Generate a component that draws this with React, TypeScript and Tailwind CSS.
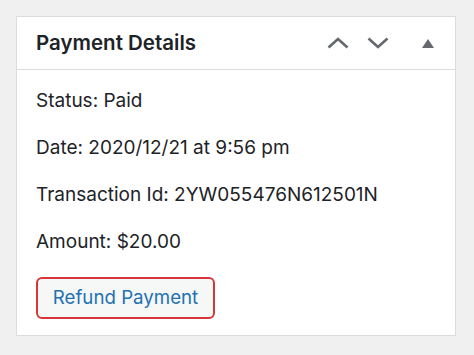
export default function App() {
  const rows = [
    "Status: Paid",
    "Date: 2020/12/21 at 9:56 pm",
    "Transaction Id: 2YW055476N612501N",
    "Amount: $20.00",
  ];

  return (
    <div
      className="w-[474px] h-[355px] bg-[#f0f0f1] pt-4 pl-4 pr-[18px]"
      style={{ fontFamily: "Inter, 'Liberation Sans', sans-serif" }}
    >
      <div className="bg-white border border-[#dcdcde] h-[320px]">
        <div className="flex items-center h-[53px] pl-[19px] pr-[21px] border-b border-[#dcdcde]">
          <h2 className="text-[20.5px] font-semibold text-[#1d2327] flex-1">Payment Details</h2>
          <div className="flex items-center text-[#646970]">
            <svg width="22" height="12" viewBox="0 0 22 12" fill="none" stroke="currentColor" strokeWidth="2.6" className="mr-[18px]">
              <path d="M1.5 10.5L11 2l9.5 8.5" />
            </svg>
            <svg width="22" height="12" viewBox="0 0 22 12" fill="none" stroke="currentColor" strokeWidth="2.6" className="mr-[33px]">
              <path d="M1.5 1.5L11 10l9.5-8.5" />
            </svg>
            <svg width="12" height="9" viewBox="0 0 12 9" fill="currentColor">
              <path d="M0 9L6 0l6 9z" />
            </svg>
          </div>
        </div>
        <div className="pl-[19px] pt-[19px] flex flex-col gap-[24px] text-[19px] text-[#1d2327]">
          {rows.map((r) => (
            <p key={r} className="leading-[23px]">{r}</p>
          ))}
          <div>
            <button className="h-[42px] w-[179px] rounded-[6px] border-2 border-[#d63638] bg-[#f6f7f7] text-[#2271b1] text-[18.7px]">
              Refund Payment
            </button>
          </div>
        </div>
      </div>
    </div>
  );
}
